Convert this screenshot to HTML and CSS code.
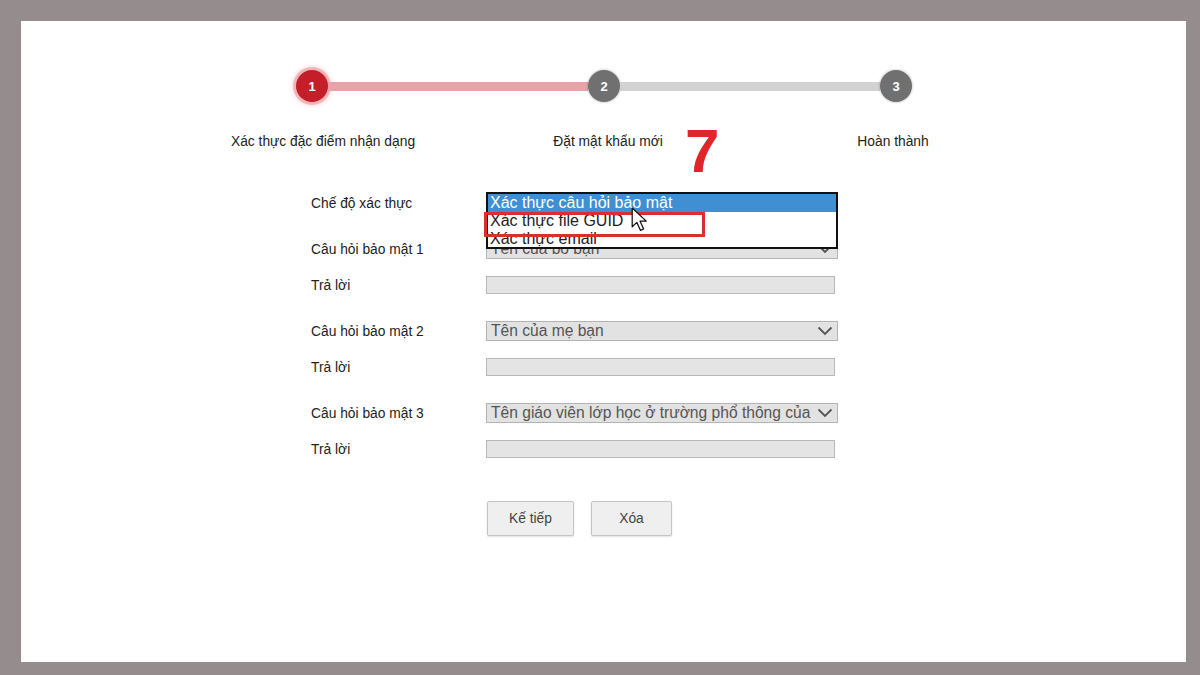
FILE: index.html
```html
<!DOCTYPE html>
<html lang="vi">
<head>
    <meta charset="UTF-8">
    <title>Quên mật khẩu</title>
    <link rel="stylesheet" href="styles.css">
</head>
<body>
    <div class="sheet">
        <!-- thanh tiến trình -->
        <div class="stepper">
            <span class="step active">1</span>
            <span class="bar done"></span>
            <span class="step">2</span>
            <span class="bar"></span>
            <span class="step">3</span>
        </div>
        <div class="step-labels">
            <span>Xác thực đặc điểm nhận dạng</span>
            <span>Đặt mật khẩu mới</span>
            <span>Hoàn thành</span>
        </div>

        <form class="form">
            <div class="group">
                <div class="field">
                    <label>Chế độ xác thực</label>
                    <div class="select-wrap">
                        <div class="select"><span>Xác thực câu hỏi bảo mật</span></div>
                        <ul class="options">
                            <li class="selected">Xác thực câu hỏi bảo mật</li>
                            <li>Xác thực file GUID</li>
                            <li>Xác thực email</li>
                        </ul>
                        <span class="highlight-box"></span>
                        <svg class="cursor" width="18" height="26" viewBox="0 0 17 25">
                            <path d="M1 1 L1 19 L5.5 14.8 L9 22.5 L12 21.2 L8.6 13.6 L14.5 13.6 Z" fill="#fff" stroke="#111" stroke-width="1.2" stroke-linejoin="round"/>
                        </svg>
                    </div>
                </div>
            </div>
            <div class="group">
                <div class="field">
                    <label>Câu hỏi bảo mật 1</label>
                    <div class="select"><span>Tên của bố bạn</span>
                        <svg width="16" height="10" viewBox="0 0 16 10"><path d="M1.5 1.5 L8 8 L14.5 1.5" fill="none" stroke="#555" stroke-width="1.8"/></svg>
                    </div>
                </div>
                <div class="field">
                    <label>Trả lời</label>
                    <input type="text" class="answer">
                </div>
            </div>
            <div class="group">
                <div class="field">
                    <label>Câu hỏi bảo mật 2</label>
                    <div class="select"><span>Tên của mẹ bạn</span>
                        <svg width="16" height="10" viewBox="0 0 16 10"><path d="M1.5 1.5 L8 8 L14.5 1.5" fill="none" stroke="#555" stroke-width="1.8"/></svg>
                    </div>
                </div>
                <div class="field">
                    <label>Trả lời</label>
                    <input type="text" class="answer">
                </div>
            </div>
            <div class="group">
                <div class="field">
                    <label>Câu hỏi bảo mật 3</label>
                    <div class="select"><span>Tên giáo viên lớp học ở trường phổ thông của</span>
                        <svg width="16" height="10" viewBox="0 0 16 10"><path d="M1.5 1.5 L8 8 L14.5 1.5" fill="none" stroke="#555" stroke-width="1.8"/></svg>
                    </div>
                </div>
                <div class="field">
                    <label>Trả lời</label>
                    <input type="text" class="answer">
                </div>
            </div>

            <div class="buttons">
                <button type="button" class="next">Kế tiếp</button>
                <button type="reset" class="clear">Xóa</button>
            </div>
        </form>

        <div class="annotation">7</div>
    </div>
</body>
</html>
```

FILE: styles.css
```css
body {
    margin: 0;
    background-color: #958c8e;
    font-family: "Liberation Sans", Arial, sans-serif;
    color: #222;
}
.sheet {
    position: relative;
    margin: 21px 14px 13px 21px;
    height: 641px;
    background-color: #fff;
    padding-top: 49px;
    box-sizing: border-box;
}
.stepper {
    display: flex;
    align-items: center;
    width: 616px;
    margin-left: 275px;
}
.step {
    width: 32px;
    height: 32px;
    border-radius: 50%;
    background-color: #707070;
    color: #fff;
    font-size: 13px;
    font-weight: bold;
    display: flex;
    align-items: center;
    justify-content: center;
    flex-shrink: 0;
    box-shadow: 0 0 2px 1px rgba(0, 0, 0, 0.15);
}
.step.active {
    background-color: #c41e2b;
    box-shadow: 0 0 0 3px rgba(235, 150, 155, 0.6), 0 0 4px 4px rgba(235, 150, 155, 0.3);
}
.bar {
    flex: 1;
    height: 9px;
    background-color: #d2d2d2;
}
.bar.done {
    background-color: #e9a2a7;
}
.step-labels {
    display: grid;
    grid-template-columns: 200px 200px 200px;
    column-gap: 85px;
    margin-left: 202px;
    margin-top: 32px;
    font-size: 13.8px;
    line-height: 16px;
    text-align: center;
}
.form {
    margin-left: 290px;
    margin-top: 43px;
    font-size: 13.8px;
}
.group {
    display: flex;
    flex-direction: column;
    gap: 16px;
    margin-bottom: 26px;
}
.field {
    display: flex;
    align-items: center;
    height: 20px;
}
.field label {
    width: 175px;
    flex-shrink: 0;
}
.select-wrap {
    position: relative;
}
.select {
    width: 352px;
    height: 20px;
    box-sizing: border-box;
    border: 1px solid #b4b4b4;
    background-color: #e2e2e2;
    color: #555;
    font-size: 15.6px;
    padding: 0 4px;
    display: flex;
    align-items: center;
    justify-content: space-between;
    white-space: nowrap;
    overflow: hidden;
}
.select svg {
    flex-shrink: 0;
    margin-left: 6px;
}
.answer {
    width: 349px;
    height: 18px;
    box-sizing: border-box;
    border: 1px solid #b8b8b8;
    background-color: #e4e4e4;
    margin: 0;
}
.options {
    position: absolute;
    top: -1px;
    left: 0;
    width: 352px;
    height: 57px;
    box-sizing: border-box;
    margin: 0;
    padding: 0;
    list-style: none;
    border: 2px solid #111;
    background-color: #fff;
    font-size: 16px;
    z-index: 2;
}
.options li {
    height: 18px;
    line-height: 18px;
    padding-left: 2px;
    color: #222;
    white-space: nowrap;
}
.options li.selected {
    background-color: #3f8fd2;
    color: #fff;
}
.highlight-box {
    position: absolute;
    top: 19px;
    left: -2px;
    width: 221px;
    height: 25px;
    box-sizing: border-box;
    border: 3px solid #d9302f;
    z-index: 3;
}
.cursor {
    position: absolute;
    top: 14px;
    left: 145px;
    z-index: 4;
}
.buttons {
    display: flex;
    gap: 17px;
    margin-left: 176px;
    margin-top: 42px;
}
.buttons button {
    height: 35px;
    border: 1px solid #c4c4c4;
    border-radius: 2px;
    background-color: #efefef;
    box-shadow: 0 1px 2px rgba(0, 0, 0, 0.12);
    font-family: "Liberation Sans", Arial, sans-serif;
    font-size: 13.8px;
    color: #444;
    cursor: pointer;
}
.buttons .next {
    width: 87px;
}
.buttons .clear {
    width: 81px;
}
.annotation {
    position: absolute;
    top: 99px;
    left: 664px;
    font-size: 62px;
    font-weight: bold;
    color: #e0262a;
    line-height: 1;
}
```
